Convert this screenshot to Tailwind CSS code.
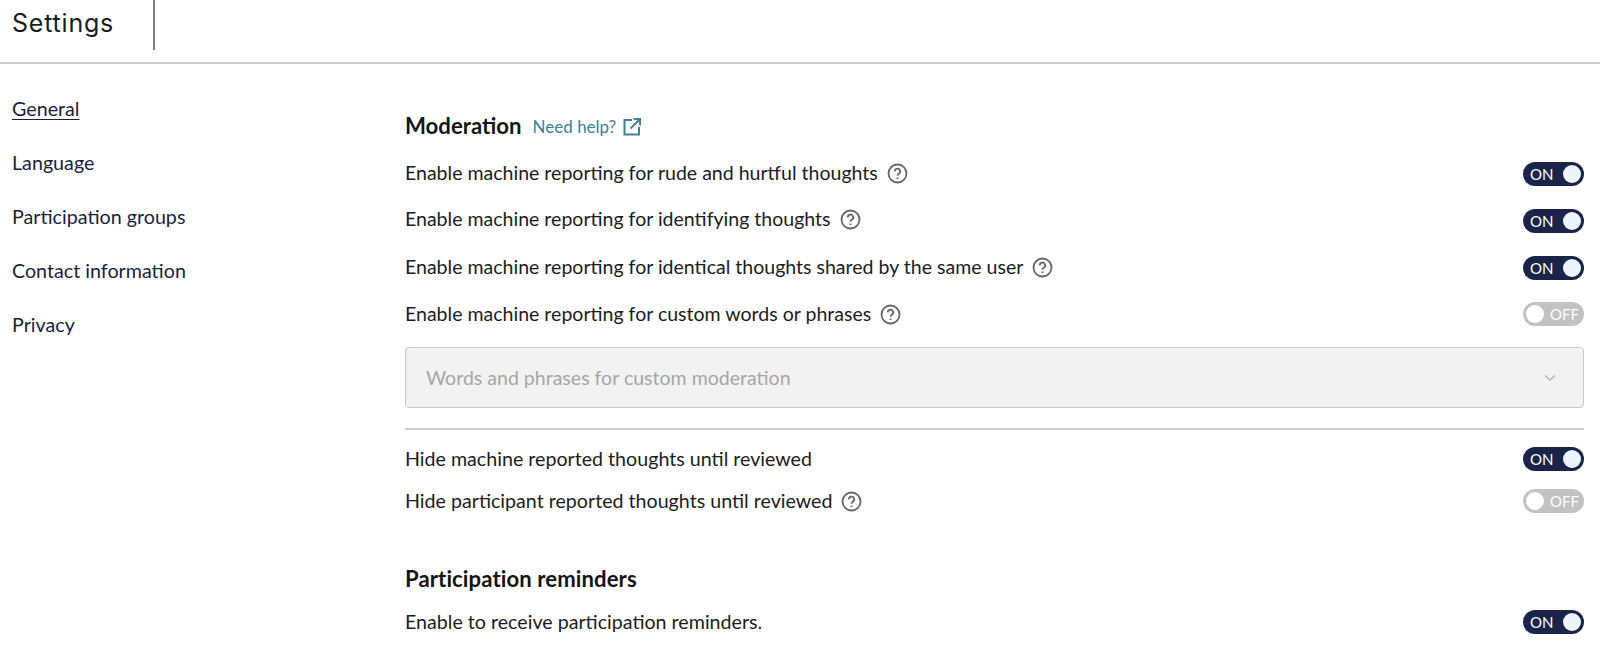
<!DOCTYPE html>
<html lang="en">
<head>
    <meta charset="UTF-8">
    <title>Settings</title>
    <script src="https://cdn.jsdelivr.net/npm/@tailwindcss/browser@4"></script>
</head>
<body class="bg-white text-[#1b1f3b] font-['Lato',sans-serif] h-[664px] overflow-hidden">
    <!-- Header -->
    <header class="h-[64px] border-b-2 border-[#cfcfcf]">
        <div class="w-[155px] h-[50px] border-r-2 border-[#808083] pl-[12px] pt-[7px]">
            <h1 class="font-['Inter',sans-serif] text-[25px] leading-[33px] font-normal text-[#1c1c1c] tracking-[0.8px]">Settings</h1>
        </div>
    </header>

    <div class="flex">
        <!-- Sidebar -->
        <nav class="w-[405px] pl-[12px] pt-[33px] flex flex-col gap-[30px] text-[19.700px] leading-[24px] shrink-0">
            <a class="underline underline-offset-[3px] decoration-1">General</a>
            <a>Language</a>
            <a>Participation groups</a>
            <a>Contact information</a>
            <a>Privacy</a>
        </nav>

        <!-- Main -->
        <main class="w-[1179px] pt-[48px] text-[19.550px] text-[#1c1c1c]">
            <div class="flex items-center h-[28px]">
                <h2 class="text-[22.200px] font-bold leading-[28px] text-[#141414]">Moderation</h2>
                <a class="ml-[11px] mt-[2px] text-[17px] text-[#3f8296] flex items-center gap-[7px]">Need help?
                    <svg class="w-[18px] h-[18px]" viewBox="0 0 18 18" fill="none" stroke="#3f8296" stroke-width="2"><path d="M9 2H1.500V16.500H16V9M10.500 1H17V7.500M17 1L7.500 10.500"/></svg>
                </a>
            </div>

            <div class="flex items-center justify-between h-[24px] mt-[21px]">
                <div class="flex items-center gap-[9px]"><span>Enable machine reporting for rude and hurtful thoughts</span>
                    <svg class="w-[21px] h-[21px]" viewBox="0 0 21 21" fill="none" stroke="#666" stroke-width="1.800"><circle cx="10.500" cy="10.500" r="9"/><path d="M7.800 8.300a2.700 2.700 0 1 1 4 2.400c-.9.500-1.300 1-1.300 2"/><path d="M10.500 14.500v1.500"/></svg>
                </div>
                <div class="w-[61px] h-[24px] mt-[2px] rounded-full bg-[#1a2348] flex items-center justify-between pl-[7px] pr-[3px] text-white text-[15px]"><span>ON</span><span class="w-[18px] h-[18px] rounded-full bg-[#eef4fb]"></span></div>
            </div>
            <div class="flex items-center justify-between h-[24px] mt-[22px]">
                <div class="flex items-center gap-[9px]"><span>Enable machine reporting for identifying thoughts</span>
                    <svg class="w-[21px] h-[21px]" viewBox="0 0 21 21" fill="none" stroke="#666" stroke-width="1.800"><circle cx="10.500" cy="10.500" r="9"/><path d="M7.800 8.300a2.700 2.700 0 1 1 4 2.400c-.9.500-1.300 1-1.300 2"/><path d="M10.500 14.500v1.500"/></svg>
                </div>
                <div class="w-[61px] h-[24px] mt-[4px] rounded-full bg-[#1a2348] flex items-center justify-between pl-[7px] pr-[3px] text-white text-[15px]"><span>ON</span><span class="w-[18px] h-[18px] rounded-full bg-[#eef4fb]"></span></div>
            </div>
            <div class="flex items-center justify-between h-[24px] mt-[24px]">
                <div class="flex items-center gap-[9px]"><span>Enable machine reporting for identical thoughts shared by the same user</span>
                    <svg class="w-[21px] h-[21px]" viewBox="0 0 21 21" fill="none" stroke="#666" stroke-width="1.800"><circle cx="10.500" cy="10.500" r="9"/><path d="M7.800 8.300a2.700 2.700 0 1 1 4 2.400c-.9.500-1.300 1-1.300 2"/><path d="M10.500 14.500v1.500"/></svg>
                </div>
                <div class="w-[61px] h-[24px] mt-[2px] rounded-full bg-[#1a2348] flex items-center justify-between pl-[7px] pr-[3px] text-white text-[15px]"><span>ON</span><span class="w-[18px] h-[18px] rounded-full bg-[#eef4fb]"></span></div>
            </div>
            <div class="flex items-center justify-between h-[24px] mt-[23px]">
                <div class="flex items-center gap-[9px]"><span>Enable machine reporting for custom words or phrases</span>
                    <svg class="w-[21px] h-[21px]" viewBox="0 0 21 21" fill="none" stroke="#666" stroke-width="1.800"><circle cx="10.500" cy="10.500" r="9"/><path d="M7.800 8.300a2.700 2.700 0 1 1 4 2.400c-.9.500-1.300 1-1.300 2"/><path d="M10.500 14.500v1.500"/></svg>
                </div>
                <div class="w-[61px] h-[24px] rounded-full bg-[#c2c2c2] flex items-center justify-between pl-[3px] pr-[5px] text-white text-[15px]"><span class="w-[18px] h-[18px] rounded-full bg-white"></span><span>OFF</span></div>
            </div>

            <!-- Custom words select -->
            <div class="h-[61px] mt-[21px] rounded-[4px] border border-[#c9c9c9] bg-[#f2f2f2] flex items-center justify-between pl-[20px] pr-[26px] text-[#a6a6a6]">
                <span>Words and phrases for custom moderation</span>
                <svg class="w-[14px] h-[8px]" viewBox="0 0 14 8" fill="none" stroke="#b5b5b5" stroke-width="1.500"><path d="M2 1.500L7 6L12 1.500"/></svg>
            </div>

            <div class="h-[2px] mt-[20px] bg-[#cfcfcf]"></div>

            <div class="flex items-center justify-between h-[24px] mt-[17px]">
                <span class="text-[19.650px]">Hide machine reported thoughts until reviewed</span>
                <div class="w-[61px] h-[24px] rounded-full bg-[#1a2348] flex items-center justify-between pl-[7px] pr-[3px] text-white text-[15px]"><span>ON</span><span class="w-[18px] h-[18px] rounded-full bg-[#eef4fb]"></span></div>
            </div>
            <div class="flex items-center justify-between h-[24px] mt-[18px]">
                <div class="flex items-center gap-[9px]"><span class="text-[19.650px]">Hide participant reported thoughts until reviewed</span>
                    <svg class="w-[21px] h-[21px]" viewBox="0 0 21 21" fill="none" stroke="#666" stroke-width="1.800"><circle cx="10.500" cy="10.500" r="9"/><path d="M7.800 8.300a2.700 2.700 0 1 1 4 2.400c-.9.500-1.300 1-1.300 2"/><path d="M10.500 14.500v1.500"/></svg>
                </div>
                <div class="w-[61px] h-[24px] rounded-full bg-[#c2c2c2] flex items-center justify-between pl-[3px] pr-[5px] text-white text-[15px]"><span class="w-[18px] h-[18px] rounded-full bg-white"></span><span>OFF</span></div>
            </div>

            <h2 class="text-[22.100px] font-bold leading-[28px] text-[#141414] mt-[52px] tracking-[0.1px]">Participation reminders</h2>
            <div class="flex items-center justify-between h-[24px] mt-[17px]">
                <span class="text-[19.650px]">Enable to receive participation reminders.</span>
                <div class="w-[61px] h-[24px] rounded-full bg-[#1a2348] flex items-center justify-between pl-[7px] pr-[3px] text-white text-[15px]"><span>ON</span><span class="w-[18px] h-[18px] rounded-full bg-[#eef4fb]"></span></div>
            </div>
        </main>
    </div>
</body>
</html>
